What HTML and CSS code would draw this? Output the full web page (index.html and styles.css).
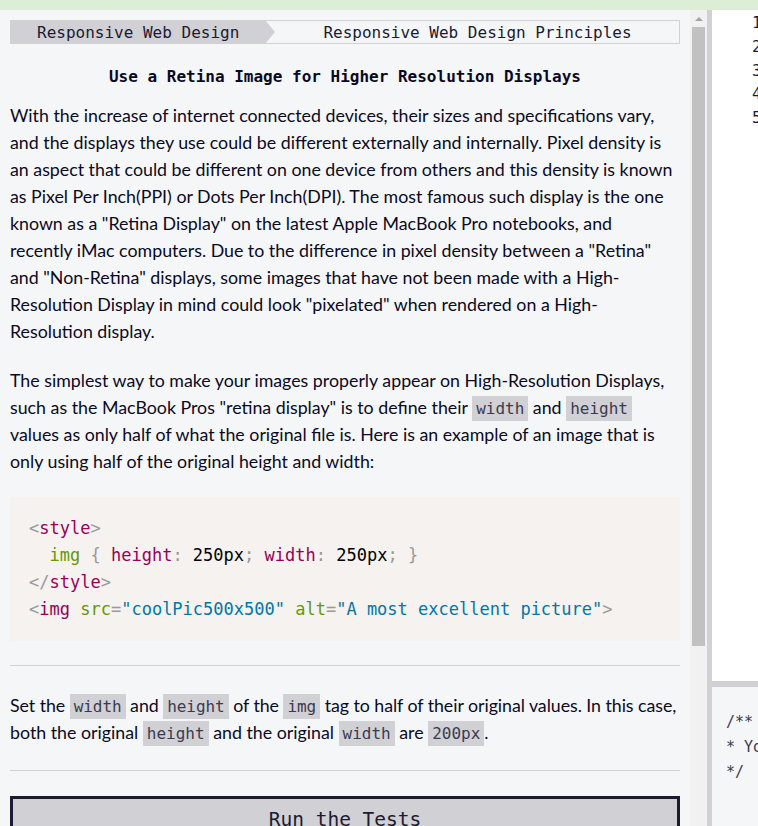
FILE: index.html
```html
<!DOCTYPE html>
<html lang="en">
<head>
<meta charset="utf-8">
<title>Use a Retina Image for Higher Resolution Displays</title>
<link rel="stylesheet" href="styles.css">
</head>
<body>
<div class="app">
  <div class="topbar"></div>
  <div class="main">
    <section class="lesson">
      <nav class="crumbs">
        <div class="crumb crumb-super">Responsive Web Design</div>
        <div class="crumb crumb-sub">Responsive Web Design Principles</div>
      </nav>
      <h2 class="title">Use a Retina Image for Higher Resolution Displays</h2>
      <div class="desc">
        <p>With the increase of internet connected devices, their sizes and specifications vary,<br>and the displays they use could be different externally and internally. Pixel density is<br>an aspect that could be different on one device from others and this density is known<br>as Pixel Per Inch(PPI) or Dots Per Inch(DPI). The most famous such display is the one<br>known as a "Retina Display" on the latest Apple MacBook Pro notebooks, and<br>recently iMac computers. Due to the difference in pixel density between a "Retina"<br>and "Non-Retina" displays, some images that have not been made with a High-<br>Resolution Display in mind could look "pixelated" when rendered on a High-<br>Resolution display.</p>
        <p>The simplest way to make your images properly appear on High-Resolution Displays,<br>such as the MacBook Pros "retina display" is to define their <code>width</code> and <code>height</code><br>values as only half of what the original file is. Here is an example of an image that is<br>only using half of the original height and width:</p>
        <pre class="codeblock"><code><span class="t-punc">&lt;</span><span class="t-tag">style</span><span class="t-punc">&gt;</span>
  <span class="t-sel">img</span> <span class="t-punc">{</span> <span class="t-prop">height</span><span class="t-punc">:</span> 250px<span class="t-punc">;</span> <span class="t-prop">width</span><span class="t-punc">:</span> 250px<span class="t-punc">;</span> <span class="t-punc">}</span>
<span class="t-punc">&lt;/</span><span class="t-tag">style</span><span class="t-punc">&gt;</span>
<span class="t-punc">&lt;</span><span class="t-tag">img</span> <span class="t-attr">src</span><span class="t-punc">=</span><span class="t-val">"coolPic500x500"</span> <span class="t-attr">alt</span><span class="t-punc">=</span><span class="t-val">"A most excellent picture"</span><span class="t-punc">&gt;</span></code></pre>
      </div>
      <hr class="rule rule-first">
      <div class="instructions">
        <p><span class="line">Set the <code>width</code> and <code>height</code> of the <code>img</code> tag to half of their original values. In this case,</span><br>both the original <code>height</code> and the original <code>width</code> are <code>200px</code>.</p>
      </div>
      <hr class="rule rule-second">
      <button class="run-btn" type="button">Run the Tests</button>
    </section>
    <div class="scrollbar">
      <div class="scroll-arrow"><span class="tri"></span></div>
      <div class="scroll-thumb"></div>
    </div>
    <div class="divider"></div>
    <div class="editor-col">
      <div class="editor">
        <div class="ln">1</div>
        <div class="ln">2</div>
        <div class="ln">3</div>
        <div class="ln">4</div>
        <div class="ln">5</div>
      </div>
      <div class="hdivider"></div>
      <div class="output">
        <div>/**</div>
        <div>* Your test output will go here</div>
        <div>*/</div>
      </div>
    </div>
  </div>
</div>
</body>
</html>
```
FILE: styles.css
```css
* { box-sizing: border-box; }
html, body { margin: 0; padding: 0; }
body {
  width: 758px;
  height: 826px;
  overflow: hidden;
  background: #f5f6f7;
  font-family: "Lato", "Noto Sans", sans-serif;
  color: #0a0a23;
}
.app { display: flex; flex-direction: column; height: 826px; }
.topbar { height: 10px; background: #dcefd6; flex: none; }
.main { display: flex; flex: 1; min-height: 0; }

.lesson {
  width: 690px;
  flex: none;
  padding: 10px 10px 0;
  overflow: hidden;
  background: #f5f6f7;
}

.crumbs { display: flex; height: 24px; }
.crumb {
  font-family: "DejaVu Sans Mono", "Liberation Mono", monospace;
  font-size: 16px;
  line-height: 25px;
  color: #1b1b32;
  white-space: nowrap;
}
.crumb-super {
  position: relative;
  background: #d0d0d5;
  padding: 0 27px;
  width: 255px;
}
.crumb-super::after {
  content: "";
  position: absolute;
  left: 100%;
  top: 0;
  border-left: 10px solid #d0d0d5;
  border-top: 12px solid transparent;
  border-bottom: 12px solid transparent;
}
.crumb-sub {
  flex: 1;
  border: 1px solid #d0d0d5;
  border-left: none;
  text-align: center;
  padding-left: 11px;
  line-height: 23px;
}

.title {
  font-family: "DejaVu Sans Mono", "Liberation Mono", monospace;
  font-size: 16px;
  font-weight: bold;
  line-height: 24px;
  text-align: center;
  margin: 21px 0 13px;
  color: #0a0a23;
}

.desc p, .instructions p {
  font-size: 17.8px;
  line-height: 27px;
  margin: 0 0 22px;
  white-space: nowrap;
}
.instructions p { margin: 0; }
.instructions .line { letter-spacing: -0.05px; }

code {
  font-family: "DejaVu Sans Mono", "Liberation Mono", monospace;
}
p code {
  font-size: 16px;
  line-height: 1;
  background: #d0d0d5;
  color: #3b3b4f;
  padding: 3px 4px 3px;
}

.codeblock {
  margin: 0;
  background: #f5f2f0;
  padding: 18px 19px;
  font-size: 17px;
  line-height: 27px;
  color: #000;
  white-space: pre;
}
.codeblock code { font-size: 17px; }
.t-punc { color: #999; }
.t-tag { color: #905; }
.t-prop { color: #905; }
.t-sel { color: #690; }
.t-attr { color: #690; }
.t-val { color: #07a; }

.rule {
  border: none;
  border-top: 1px solid #d0d0d5;
  margin: 0;
}
.rule-first { margin: 24px 0 26px; }
.rule-second { margin: 24px 0 25px; }

.run-btn {
  display: block;
  width: 100%;
  height: 44px;
  background: #d0d0d5;
  border: 3px solid #1b1b32;
  font-family: "DejaVu Sans Mono", "Liberation Mono", monospace;
  font-size: 19.5px;
  color: #1b1b32;
  padding: 3px 0 0;
  text-align: center;
  line-height: 28px;
}

.scrollbar {
  width: 17px;
  flex: none;
  background: #f1f1f1;
  display: flex;
  flex-direction: column;
}
.scroll-arrow {
  height: 17px;
  display: flex;
  align-items: center;
  justify-content: center;
}
.tri {
  width: 0;
  height: 0;
  border-left: 4px solid transparent;
  border-right: 4px solid transparent;
  border-bottom: 4px solid #a3a3a3;
}
.scroll-thumb {
  height: 619px;
  margin: 0 2px;
  background: #c1c1c1;
}

.divider { width: 5px; flex: none; background: #d0d0d5; }

.editor-col {
  flex: 1;
  display: flex;
  flex-direction: column;
  min-width: 0;
  overflow: hidden;
}
.editor {
  height: 671px;
  background: #fff;
  padding: 1px 0 0 40px;
  font-family: "DejaVu Sans Mono", "Liberation Mono", monospace;
  font-size: 16px;
  line-height: 23.75px;
  color: #1b1b32;
}
.hdivider { height: 6px; background: #d0d0d5; flex: none; }
.output {
  flex: 1;
  background: #f5f6f7;
  padding: 23px 0 0 14px;
  font-family: "DejaVu Sans Mono", "Liberation Mono", monospace;
  font-size: 15px;
  line-height: 25px;
  color: #3b3b4f;
  white-space: nowrap;
}
```
